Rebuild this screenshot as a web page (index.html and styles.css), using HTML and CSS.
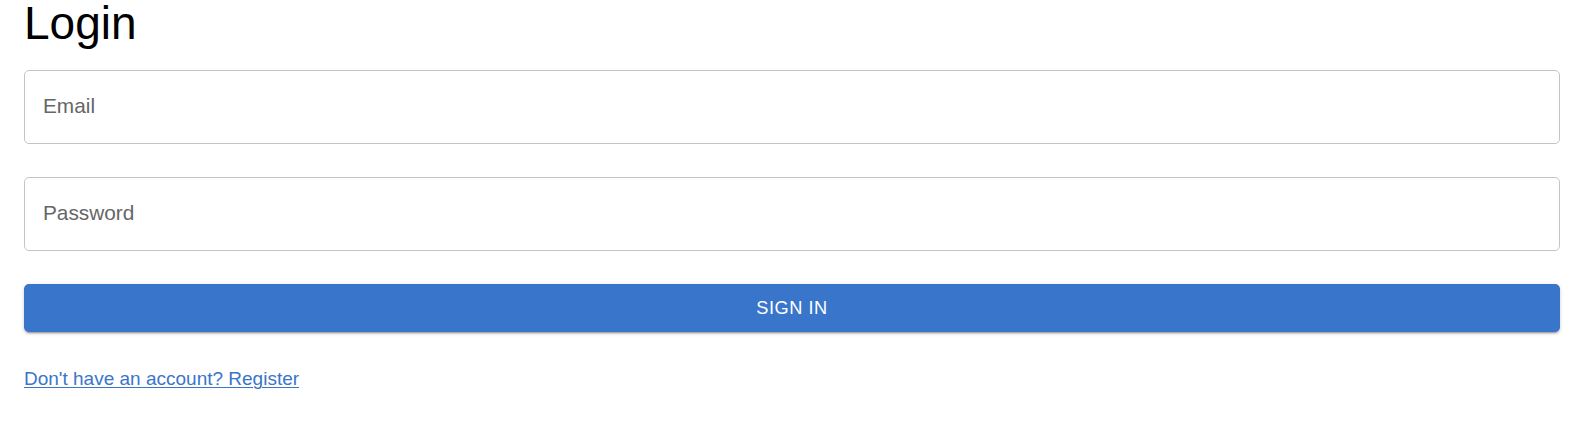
FILE: index.html
```html
<!DOCTYPE html>
<html lang="en">
<head>
<meta charset="utf-8">
<title>Login</title>
<link rel="stylesheet" href="styles.css">
</head>
<body>
<main class="page">
  <h1 class="title">Login</h1>
  <form class="form">
    <label class="field"><input class="field-input" type="email" placeholder="Email"></label>
    <label class="field"><input class="field-input" type="password" placeholder="Password"></label>
    <button class="btn" type="button">Sign In</button>
  </form>
  <a class="link" href="#">Don't have an account? Register</a>
</main>
</body>
</html>
```

FILE: styles.css
```css
html, body {
  margin: 0;
  padding: 0;
  background: #ffffff;
}
body {
  font-family: "Liberation Sans", Arial, Helvetica, sans-serif;
  color: #000;
}
.page {
  padding: 0 20px 0 24px;
  display: flex;
  flex-direction: column;
  align-items: flex-start;
}
.title {
  margin: 0;
  font-size: 46px;
  line-height: 46px;
  font-weight: 400;
}
.form {
  align-self: stretch;
  display: flex;
  flex-direction: column;
  gap: 33px;
  margin-top: 24px;
}
.field {
  display: flex;
  height: 74px;
  box-sizing: border-box;
  border: 1px solid #c4c4c4;
  border-radius: 5px;
}
.field-input {
  flex: 1;
  border: 0;
  outline: none;
  background: transparent;
  padding: 0 0 2px 18px;
  font-family: inherit;
  font-size: 20.8px;
  color: #222;
}
.field-input::placeholder {
  color: #666666;
  opacity: 1;
}
.btn {
  height: 48px;
  border: 0;
  border-radius: 5px;
  background: #3975cb;
  color: #ffffff;
  font-family: inherit;
  font-size: 18.2px;
  letter-spacing: 0.52px;
  text-transform: uppercase;
  box-shadow: 0 3px 1px -2px rgba(0,0,0,0.2), 0 2px 2px 0 rgba(0,0,0,0.14), 0 1px 5px 0 rgba(0,0,0,0.12);
  cursor: pointer;
}
.link {
  margin-top: 36px;
  font-size: 19px;
  line-height: 22px;
  color: #3a75c9;
  text-decoration: underline;
  text-underline-offset: 2px;
  text-decoration-thickness: 1px;
}
```
